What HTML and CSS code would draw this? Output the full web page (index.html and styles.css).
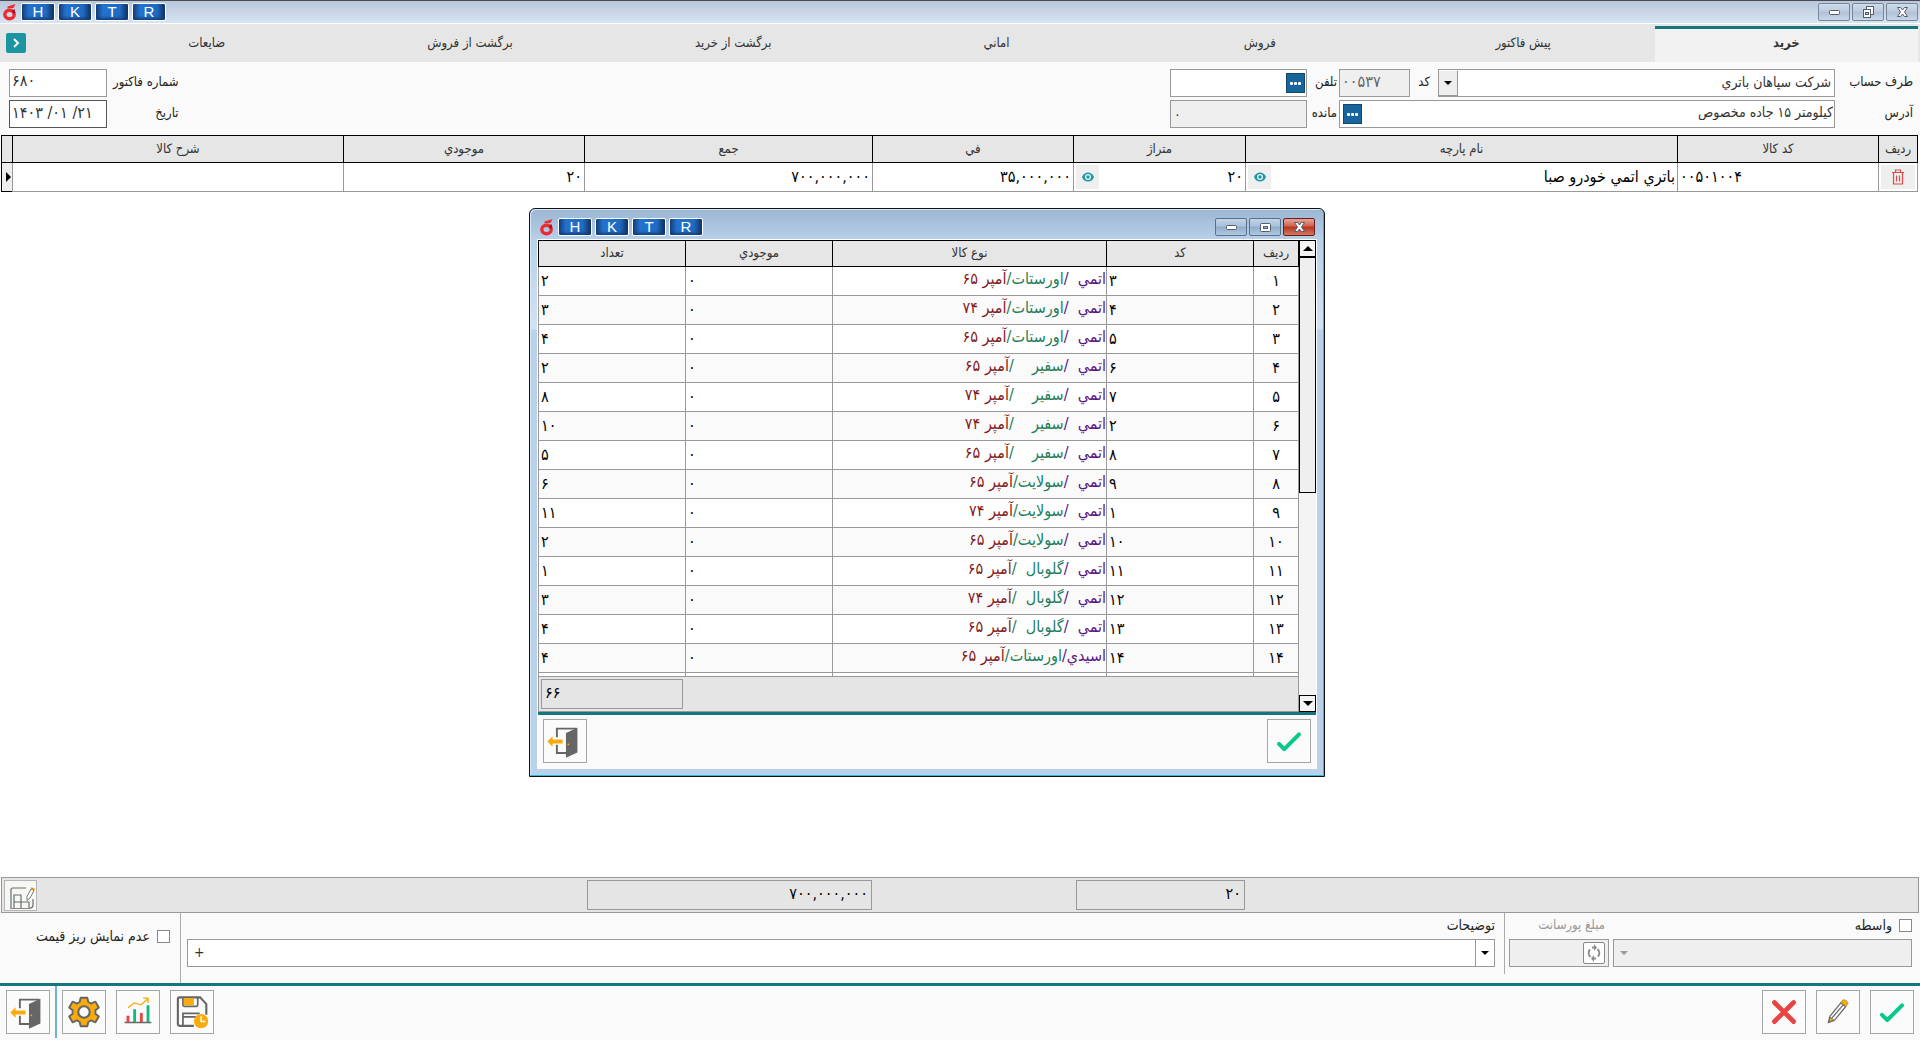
FILE: index.html
```html
<!DOCTYPE html>
<html lang="fa" dir="rtl">
<head>
<meta charset="utf-8">
<title>خريد</title>
<link rel="stylesheet" href="styles.css">
</head>
<body>
<svg class="defs" aria-hidden="true">
  <symbol id="logo" viewBox="0 0 14 18"><ellipse cx="7" cy="11.500" rx="4.700" ry="4.200" fill="none" stroke="#ee2b33" stroke-width="3.400"/><path d="M5 3.500 13 1l-2 4-6 .5z" fill="#ee2b33"/><path d="M9 8l3-2 1 4-2 1z" fill="#a81520"/></symbol>
  <symbol id="check" viewBox="0 0 44 44"><path d="M11.500 25 17 30.500 32.500 15" fill="none" stroke="#06c98b" stroke-width="4.200" stroke-linecap="round" stroke-linejoin="round"/></symbol>
  <symbol id="exit" viewBox="0 0 44 44"><path d="M13.500 18V9H34M13.500 26v8.500H24" fill="none" stroke="#666" stroke-width="2"/><path d="M23 13.500 35 8v26l-12 5.500z" fill="#666"/><path d="M3.500 22.500 9 17v3.500h10.500v4H9V28z" fill="#f9ab0b"/><circle cx="25.500" cy="25.500" r="1" fill="#f9ab0b"/></symbol>
  <symbol id="eye" viewBox="0 0 14 12"><path d="M1 6c2-6 10-6 12 0-2 6-10 6-12 0z" fill="#1f98a5"/><circle cx="7" cy="6" r="3" fill="#e8f5f6"/><circle cx="7" cy="6" r="1.700" fill="#1f98a5"/></symbol>
  <symbol id="min" viewBox="0 0 20 14"><rect x="5.500" y="5.500" width="10" height="4" rx="1" fill="#fff" stroke="#555c6b"/></symbol>
  <symbol id="max" viewBox="0 0 20 14"><rect x="5.500" y="3.500" width="10" height="8" rx="1" fill="#fff" stroke="#555c6b"/><rect x="8.500" y="6.500" width="4" height="2" fill="#9db6d0" stroke="#555c6b"/></symbol>
  <symbol id="restore" viewBox="0 0 20 14"><rect x="8.500" y="1.500" width="7" height="8" fill="#fff" stroke="#555c6b"/><rect x="5.500" y="4.500" width="7" height="8" fill="#fff" stroke="#555c6b"/><rect x="7.500" y="7.500" width="3" height="2" fill="#b7c6d8" stroke="#555c6b"/></symbol>
  <symbol id="close" viewBox="0 0 20 14"><path d="M5.500 2.500h3l2 2.500 2-2.500h3L12.500 7l3 4.500h-3l-2-2.500-2 2.500h-3L8.500 7z" fill="#fff" stroke="#555c6b"/></symbol>
</svg>

<div class="app">
  <header class="titlebar" dir="ltr">
    <svg class="logo"><use href="#logo"/></svg>
    <div class="keys"><button>H</button><button>K</button><button>T</button><button>R</button></div>
    <div class="controls">
      <button aria-label="کوچک"><svg><use href="#min"/></svg></button>
      <button aria-label="بازگرداندن"><svg><use href="#restore"/></svg></button>
      <button aria-label="بستن"><svg><use href="#close"/></svg></button>
    </div>
  </header>

  <nav class="tabs">
    <button class="tab active">خريد</button>
    <button class="tab">پيش فاکتور</button>
    <button class="tab">فروش</button>
    <button class="tab">اماني</button>
    <button class="tab">برگشت از خريد</button>
    <button class="tab">برگشت از فروش</button>
    <button class="tab">ضايعات</button>
    <div class="tab-more"><button aria-label="بيشتر"><svg viewBox="0 0 20 20"><path d="M8 6l4 4-4 4" fill="none" stroke="#fff" stroke-width="2"/></svg></button></div>
  </nav>

  <form class="invoice">
    <div class="party">
      <label for="party">طرف حساب</label>
      <div class="party-line">
        <div class="combo"><select id="party"><option>شرکت سپاهان باتري</option></select><span class="arrow boxed"></span></div>
        <label for="code">کد</label>
        <input id="code" class="field code" dir="ltr" value="۰۰۵۳۷" readonly>
      </div>
      <label for="phone">تلفن</label>
      <div class="field with-dots"><button type="button" class="dots" aria-label="تلفن‌ها"><i></i><i></i><i></i></button><input id="phone"></div>
      <label for="address">آدرس</label>
      <div class="field with-dots"><input id="address" value="کيلومتر ۱۵ جاده مخصوص"><button type="button" class="dots" aria-label="آدرس‌ها"><i></i><i></i><i></i></button></div>
      <label for="balance">مانده</label>
      <input id="balance" class="field balance" dir="ltr" value="۰" readonly>
    </div>
    <div class="number">
      <label for="no">شماره فاکتور</label>
      <input id="no" class="field" dir="ltr" value="۶۸۰">
      <label for="date">تاريخ</label>
      <input id="date" class="field date" dir="ltr" value="۱۴۰۳ /۰۱ /۲۱">
    </div>
  </form>

  <main class="workspace">
    <table class="grid items">
      <colgroup><col class="c-row"><col class="c-code"><col class="c-name"><col class="c-len"><col class="c-fee"><col class="c-sum"><col class="c-stock"><col><col class="c-mark"></colgroup>
      <thead><tr><th>رديف</th><th>کد کالا</th><th>نام پارچه</th><th>متراژ</th><th>في</th><th>جمع</th><th>موجودي</th><th>شرح کالا</th><th></th></tr></thead>
      <tbody><tr>
        <td><button class="cell-btn wide" aria-label="حذف"><svg viewBox="0 0 14 16"><path d="M1 3.500h12M4.500 3V1h5v2M2.500 4v11h9V4M5.500 6.500v6M8.500 6.500v6" fill="none" stroke="#e04848" stroke-width="1.200"/></svg></button></td>
        <td class="num">۰۰۵۰۱۰۰۴</td>
        <td><div class="split"><span>باتري اتمي خودرو صبا</span><button class="cell-btn" aria-label="نمايش"><svg><use href="#eye"/></svg></button></div></td>
        <td><div class="split"><span>۲۰</span><button class="cell-btn" aria-label="نمايش"><svg><use href="#eye"/></svg></button></div></td>
        <td>۳۵,۰۰۰,۰۰۰</td>
        <td>۷۰۰,۰۰۰,۰۰۰</td>
        <td>۲۰</td>
        <td></td>
        <td class="mark"><span></span></td>
      </tr></tbody>
    </table>

    <section class="dialog">
      <header class="titlebar" dir="ltr">
        <svg class="logo"><use href="#logo"/></svg>
        <div class="keys"><button>H</button><button>K</button><button>T</button><button>R</button></div>
        <div class="controls">
          <button aria-label="کوچک"><svg><use href="#min"/></svg></button>
          <button aria-label="بزرگ"><svg><use href="#max"/></svg></button>
          <button class="red" aria-label="بستن"><svg><use href="#close"/></svg></button>
        </div>
      </header>
      <div class="dialog-body">
        <div class="list">
          <div class="scrollbar"><button aria-label="بالا"><span class="up"></span></button><div class="thumb"></div><button aria-label="پايين"><span class="down"></span></button></div>
          <div class="list-main">
            <div class="rows">
              <table class="grid kinds">
                <colgroup><col class="k-row"><col class="k-mid"><col><col class="k-mid"><col class="k-mid"></colgroup>
                <thead><tr><th>رديف</th><th>کد</th><th>نوع کالا</th><th>موجودي</th><th>تعداد</th></tr></thead>
                <tbody>
                  <tr><td>۱</td><td>۳</td><td><b>اتمي  /</b><i>اورستات/</i><s>آمپر ۶۵</s></td><td>۰</td><td>۲</td></tr>
                  <tr><td>۲</td><td>۴</td><td><b>اتمي  /</b><i>اورستات/</i><s>آمپر ۷۴</s></td><td>۰</td><td>۳</td></tr>
                  <tr><td>۳</td><td>۵</td><td><b>اتمي  /</b><i>اورستات/</i><s>آمپر ۶۵</s></td><td>۰</td><td>۴</td></tr>
                  <tr><td>۴</td><td>۶</td><td><b>اتمي  /</b><i>سفير    /</i><s>آمپر ۶۵</s></td><td>۰</td><td>۲</td></tr>
                  <tr><td>۵</td><td>۷</td><td><b>اتمي  /</b><i>سفير    /</i><s>آمپر ۷۴</s></td><td>۰</td><td>۸</td></tr>
                  <tr><td>۶</td><td>۲</td><td><b>اتمي  /</b><i>سفير    /</i><s>آمپر ۷۴</s></td><td>۰</td><td>۱۰</td></tr>
                  <tr><td>۷</td><td>۸</td><td><b>اتمي  /</b><i>سفير    /</i><s>آمپر ۶۵</s></td><td>۰</td><td>۵</td></tr>
                  <tr><td>۸</td><td>۹</td><td><b>اتمي  /</b><i>سولايت/</i><s>آمپر ۶۵</s></td><td>۰</td><td>۶</td></tr>
                  <tr><td>۹</td><td>۱</td><td><b>اتمي  /</b><i>سولايت/</i><s>آمپر ۷۴</s></td><td>۰</td><td>۱۱</td></tr>
                  <tr><td>۱۰</td><td>۱۰</td><td><b>اتمي  /</b><i>سولايت/</i><s>آمپر ۶۵</s></td><td>۰</td><td>۲</td></tr>
                  <tr><td>۱۱</td><td>۱۱</td><td><b>اتمي  /</b><i>گلوبال  /</i><s>آمپر ۶۵</s></td><td>۰</td><td>۱</td></tr>
                  <tr><td>۱۲</td><td>۱۲</td><td><b>اتمي  /</b><i>گلوبال  /</i><s>آمپر ۷۴</s></td><td>۰</td><td>۳</td></tr>
                  <tr><td>۱۳</td><td>۱۳</td><td><b>اتمي  /</b><i>گلوبال  /</i><s>آمپر ۶۵</s></td><td>۰</td><td>۴</td></tr>
                  <tr><td>۱۴</td><td>۱۴</td><td><b>اسيدي/</b><i>اورستات/</i><s>آمپر ۶۵</s></td><td>۰</td><td>۴</td></tr>
                  <tr><td></td><td></td><td></td><td></td><td></td></tr>
                </tbody>
              </table>
            </div>
            <div class="list-total"><output class="total" dir="ltr">۶۶</output></div>
          </div>
        </div>
        <div class="dialog-actions">
          <button class="tool" aria-label="تاييد"><svg><use href="#check"/></svg></button>
          <button class="tool" aria-label="خروج"><svg><use href="#exit"/></svg></button>
        </div>
      </div>
    </section>
  </main>

  <div class="totals">
    <output class="total t-len">۲۰</output>
    <output class="total t-sum">۷۰۰,۰۰۰,۰۰۰</output>
    <button class="layout-btn" aria-label="ويرايش جدول"><svg viewBox="0 0 30 28"><path d="M5 26V7.500Q5 6 6.500 6H20M27 17v6q0 3-3 3M8 26V13h7v13M8 20h15v6" fill="none" stroke="#666f70" stroke-width="1.200"/><path d="M4 26.500h21" stroke="#888" stroke-width="1"/><path d="M21 14.500 25 7l3 1.500-4 7.500-3 2.500z" fill="#fff" stroke="#777" stroke-width="1"/><path d="M24.500 7l3.500 1.800 1-2-3.500-1.600z" fill="#e8960c"/></svg></button>
  </div>

  <section class="extras">
    <div class="broker">
      <label class="tick"><input type="checkbox">واسطه</label>
      <label for="commission" class="dim">مبلغ پورسانت</label>
      <div class="combo disabled"><select disabled aria-label="واسطه"><option></option></select><span class="arrow"></span></div>
      <div class="field disabled refresh"><button aria-label="محاسبه"><svg viewBox="0 0 18 18"><path d="M5.500 13A5.500 5.500 0 0 1 5 5.500M7 3.700A5.500 5.500 0 0 1 9.500 3.500M12.500 5A5.500 5.500 0 0 1 13 12.500M11 14.300A5.500 5.500 0 0 1 8.500 14.500" fill="none" stroke="#8d8d8d" stroke-width="2"/><path d="M9 0v7l3-3.500zM9 11v7l-3-3.500z" fill="#8d8d8d"/></svg></button><input id="commission" disabled></div>
    </div>
    <div class="notes">
      <label for="notes">توضيحات</label>
      <div class="combo" dir="ltr"><select id="notes"><option>+</option></select><span class="arrow lined"></span></div>
    </div>
    <div class="hide-price"><label class="tick"><input type="checkbox">عدم نمايش ريز قيمت</label></div>
  </section>

  <footer class="toolbar">
    <button class="tool" aria-label="تاييد"><svg><use href="#check"/></svg></button>
    <button class="tool" aria-label="ويرايش"><svg viewBox="0 0 44 44"><path d="M12 33l1.500-6.500L25 12.500l5 4L18 31z" fill="#fff" stroke="#6a6a6a" stroke-width="1.300"/><path d="M15.500 28.500 27.500 14.500" stroke="#6a6a6a" stroke-width="1.300"/><path d="M12.500 32.500l1.300-5 3.800 3z" fill="#f9ab0b" stroke="#6a6a6a"/><path d="M25 12l2-2.500q4-1 5.500 3.500L30.500 16z" fill="#f9ab0b" stroke="#b98a2e"/></svg></button>
    <button class="tool" aria-label="حذف"><svg viewBox="0 0 44 44"><path d="M12 12l20 20M32 12 12 32" stroke="#e94444" stroke-width="5" stroke-linecap="round"/></svg></button>
    <span class="spacer"></span>
    <button class="tool" aria-label="ذخيره موقت"><svg viewBox="0 0 44 44"><path d="M24 36.500H9a1.800 1.800 0 0 1-1.800-1.800V8.500A1.800 1.800 0 0 1 9 6.700h21.500l6.500 7V25" fill="none" stroke="#666" stroke-width="2.200"/><path d="M12.500 7v7.500a1.500 1.500 0 0 0 1.500 1.500h12.500a1.500 1.500 0 0 0 1.500-1.500V7M12.500 36V23.500h17.500M12.500 27h14.500" fill="none" stroke="#666" stroke-width="1.800"/><path d="M13.500 7.500H24V15H13.500z" fill="#f9ab0b"/><circle cx="31.500" cy="31.500" r="7.500" fill="#f9ab0b"/><path d="M31.500 26.500v5.500h4.500" fill="none" stroke="#fff" stroke-width="1.500"/></svg></button>
    <button class="tool" aria-label="نمودار"><svg viewBox="0 0 44 44"><path d="M8 33h28" stroke="#666" stroke-width="1.600"/><path d="M10 26h3v6.500h-3zM24 23h3v9.500h-3z" fill="#ea4444"/><path d="M17 19h3v13.500h-3zM31 15h3v17.500h-3z" fill="#12b87e"/><path d="M11.500 17.500 18 12.500l7 2L32.500 8M27.500 7.500h5v5" fill="none" stroke="#f9ab0b" stroke-width="1.400"/></svg></button>
    <button class="tool" aria-label="تنظيمات"><svg viewBox="0 0 44 44"><path d="M18.500 7h7l1 4.500 3 1.700 4.500-2 3.500 6-3.500 3v3.600l3.500 3-3.500 6-4.500-2-3 1.700-1 4.500h-7l-1-4.500-3-1.700-4.500 2-3.500-6 3.500-3v-3.600l-3.500-3 3.500-6 4.500 2 3-1.700z" fill="#f9ab0b" stroke="#666" stroke-width="2" stroke-linejoin="round"/><circle cx="22" cy="22" r="6" fill="#fafafa" stroke="#666" stroke-width="2.200"/></svg></button>
    <span class="divider"></span>
    <button class="tool" aria-label="خروج"><svg><use href="#exit"/></svg></button>
  </footer>
</div>
</body>
</html>
```

FILE: styles.css
```css
* { box-sizing: border-box; }
body { margin: 0; background: #fff; }
body, button, input, select { font-family: "DejaVu Sans Condensed", "DejaVu Sans", sans-serif; font-size: 13px; color: #333; }
input, select { font-size: 14px; }
button { padding: 0; margin: 0; border: 0; background: none; cursor: pointer; }
input, select { margin: 0; padding: 0; border: 0; background: transparent; appearance: none; outline: 0; min-width: 0; }
label { white-space: nowrap; color: #222; }
.defs { position: absolute; width: 0; height: 0; }

.app { display: flex; flex-direction: column; min-height: 100vh; background: #fafafa; }

/* window title bars */
.titlebar { display: flex; align-items: flex-start; height: 24px; padding: 2px 2px 0; border-top: 1px solid #4a4a52; border-bottom: 1px solid #fff; background: linear-gradient(#b8c7da, #d7e4f2); }
.logo { width: 15px; height: 18px; }
.keys { display: flex; gap: 3px; margin-left: 4px; flex: 1; }
.keys button { width: 34px; height: 18px; border: 1px solid #fff; border-radius: 2px; background: linear-gradient(90deg, #163d77, #2273cf 22%, #1f6ac2 75%, #102f5e); box-shadow: inset 0 -2px 3px #163d77; color: #fff; font: 15px/16px "Liberation Sans", sans-serif; }
.controls { display: flex; gap: 2px; }
.controls button { width: 32px; height: 18px; border: 1px solid #77869c; border-radius: 2px; background: linear-gradient(#d0dcea, #bccbdd 45%, #b0c1d6 50%, #c8d7e7); }
.controls svg { display: block; width: 20px; height: 14px; margin: 1px auto; }

/* tabs */
.tabs { display: flex; height: 38px; padding: 0 2px 0 1px; background: #e6e6e6; }
.tab { flex: 1; padding-bottom: 2px; }
.tab.active { margin-top: 2px; border-top: 3px solid #14777d; background: #f2f2f2; font-weight: bold; padding-bottom: 7px; }
.tab-more { width: 74px; padding: 9px 0 0 5px; direction: ltr; }
.tab-more button { width: 20px; height: 20px; border-radius: 2px; background: #1b95a2; }
.tab-more svg { display: block; width: 20px; height: 20px; }

/* invoice header */
.invoice { display: flex; justify-content: space-between; height: 73px; padding: 7px 7px 0 9px; }
.invoice label { padding-bottom: 3px; }
.party { display: grid; grid-template-columns: 76px 496px 28px 137px; grid-auto-rows: 28px; gap: 3px 2px; align-items: center; }
.party-line { display: flex; align-items: center; gap: 8px; }
.party-line .combo { width: 397px; flex: none; }
.field, .combo { height: 28px; border: 1px solid #999; background: #fff; }
input.field { padding: 0 2px 5px; width: 100%; }
.party-line .code { width: 71px; flex: none; margin-right: auto; background: #efefef; color: #666; font-size: 16px; padding: 0 2px 4px; }
.party .balance { background: #efefef; padding: 0 3px; }
.combo { display: flex; }
.combo select { flex: 1; padding: 0 3px 3px; color: #333; }
.arrow { width: 19px; display: grid; place-items: center; }
.arrow::after { content: ""; border: 4px solid transparent; border-top-color: #000; border-bottom: 0; }
.arrow.boxed { margin: 1px 0 0; background: #eee; border: 1px solid #999; border-width: 0 1px 1px 0; }
.arrow.lined { border-left: 1px solid #999; }
.with-dots { display: flex; align-items: center; padding: 0 1px 0 3px; }
.with-dots input { flex: 1; padding-bottom: 5px; }
.with-dots .dots { width: 19px; height: 20px; display: flex; align-items: center; justify-content: center; gap: 1px; background: #19659b; border: 1px solid #12486f; }
.dots i { width: 3px; height: 3px; border-radius: 1px; background: #fff; }
.number { display: grid; grid-template-columns: auto 98px; grid-auto-rows: 28px; gap: 3px 6px; align-items: center; }
.number .field { font-size: 16px; }
.number .date { border-color: #555; padding: 0 2px 3px; }

/* data grids */
.workspace { position: relative; flex: 1; background: #fff; padding: 0 2px 0 1px; }
.grid { width: 100%; table-layout: fixed; border-collapse: collapse; color: #000; }
.grid th { height: 27px; padding: 0 0 2px; border: 1px solid #000; background: #e6e6e6; font-weight: normal; color: #333; }
.grid td { height: 29px; padding: 0 2px; border: 1px solid #999; font-size: 16px; line-height: 20px; }
.c-row { width: 39px; } .c-code { width: 201px; } .c-name { width: 432px; } .c-len { width: 172px; }
.c-fee { width: 201px; } .c-sum { width: 288px; } .c-stock { width: 241px; } .c-mark { width: 11px; }
.items .num { direction: ltr; text-align: left; }
.split { display: flex; align-items: center; justify-content: space-between; }
.cell-btn { width: 23px; height: 24px; background: #efefef; }
.cell-btn.wide { width: 100%; display: block; }
.cell-btn svg { display: block; width: 14px; height: 12px; margin: auto; }
.cell-btn.wide svg { height: 16px; }
.grid .mark { padding: 0 1px; border-color: #000; background: #eee; }
.mark span { display: block; border: 5px solid transparent; border-left-color: #000; border-right: 0; width: 5px; }

/* item kinds window */
.dialog { position: absolute; top: 73px; left: 529px; width: 796px; height: 569px; display: flex; flex-direction: column; padding: 0 7px 7px; border: 1px solid #111; border-radius: 6px 6px 0 0; background: linear-gradient(#9bb6d3, #b9d1ea 32px, #d3e2f3 120px, #b9d1ea 121px); box-shadow: inset -1px -1px #35b8d8, inset 1px 1px #d8e8f6; }
.dialog .titlebar { height: 30px; padding: 9px 2px 0; border: 0; background: none; }
.dialog .controls button { border-color: #5a718e; background: linear-gradient(#c3d5e8, #a8c0da 45%, #8facca 50%, #b0c8e0); }
.dialog .controls .red { border-color: #6b1d1d; background: linear-gradient(#e2a699, #d0604d 45%, #b53420 50%, #d47a5c); }
.dialog-body { flex: 1; display: flex; flex-direction: column; background: #fafafa; border: 1px solid #fff; border-bottom: 0; }
.list { display: flex; height: 472px; }
.list-main { flex: 1; display: flex; flex-direction: column; }
.rows { height: 436px; overflow: hidden; }
.kinds th { height: 26px; }
.k-row { width: 45px; } .k-mid { width: 147px; }
.kinds tbody tr { background: #fff; }
.kinds tbody tr:nth-child(even) { background: #fafafa; }
.kinds td { direction: ltr; text-align: left; }
.kinds td:first-child { text-align: center; }
.kinds td:nth-child(3) { direction: rtl; text-align: right; white-space: pre; padding: 0 0 4px; }
.kinds b, .kinds i, .kinds s { font-weight: normal; font-style: normal; text-decoration: none; }
.kinds b { color: #5b1687; } .kinds i { color: #1d7d5c; } .kinds s { color: #831b22; }
.scrollbar { width: 17px; display: flex; flex-direction: column; background: #f4f4f4; }
.scrollbar button { height: 17px; border: 1px solid #000; background: #f4f4f4; display: grid; place-items: center; }
.scrollbar button:last-child { margin-top: auto; }
.thumb { height: 236px; border: 1px solid #000; background: #efefef; }
.up { border: 5px solid transparent; border-bottom-color: #000; border-top: 0; }
.down { border: 5px solid transparent; border-top-color: #000; border-bottom: 0; }
.list-total { flex: 1; display: flex; justify-content: flex-end; padding: 2px; border: 1px solid #999; background: #e5e5e5; }
.total { display: block; height: 30px; border: 1px solid #999; padding: 0 3px; line-height: 26px; font-size: 16px; color: #000; }
.list-total .total { width: 142px; }
.dialog-actions { display: flex; justify-content: space-between; padding: 4px 5px; border-top: 3px solid #14777d; }
.tool { width: 44px; height: 44px; border: 1px solid #a6a6a6; background: #fbfbfb; }
.tool svg { display: block; width: 42px; height: 42px; }

/* totals strip */
.totals { display: flex; height: 36px; margin: 0 1px; padding: 2px; border: 1px solid #999; background: #e5e5e5; }
.t-len { width: 169px; margin-right: 671px; }
.t-sum { width: 285px; margin-right: 204px; }
.layout-btn { width: 33px; height: 31px; margin-right: auto; border: 1px solid #b5b5b5; background: #f7f8f4; }
.layout-btn svg { display: block; width: 30px; height: 28px; }

/* broker, notes, price options */
.extras { display: flex; height: 70px; padding-right: 8px; }
.extras label { font-size: 14px; }
.broker { display: grid; grid-template-columns: 299px 100px; grid-template-rows: 22px 29px; gap: 0 4px; align-content: start; align-items: start; height: 61px; padding: 4px 0 0 4px; border-left: 1px solid #aaa; }
.tick { display: flex; align-items: center; gap: 7px; }
.tick input { width: 13px; height: 13px; border: 1px solid #888; background: #fff; }
.extras .dim { color: #999; padding-right: 4px; font-size: 13px; }
.combo.disabled, .field.disabled { background: #efefef; }
.disabled .arrow::after { border-top-color: #999; }
.refresh { display: flex; align-items: center; }
.refresh button { width: 22px; height: 22px; margin: 0 3px; border: 1px solid #888; border-radius: 2px; background: #fff; }
.refresh svg { display: block; width: 18px; height: 18px; margin: auto; }
.refresh input { flex: 1; }
.notes { flex: 1; display: grid; grid-template-rows: 22px 29px; align-content: start; align-items: start; padding: 4px 9px 0 6px; }
.notes select { padding-left: 6px; }
.hide-price { width: 181px; border-right: 1px solid #aaa; padding: 15px 10px 0; }

/* bottom toolbar */
.toolbar { display: flex; gap: 10px; height: 57px; padding: 4px 6px; border-top: 3px solid #14777d; }
.spacer { flex: 1; }
.divider { width: 2px; margin: -4px -5px -2px; background: #6fb4c8; }
```
